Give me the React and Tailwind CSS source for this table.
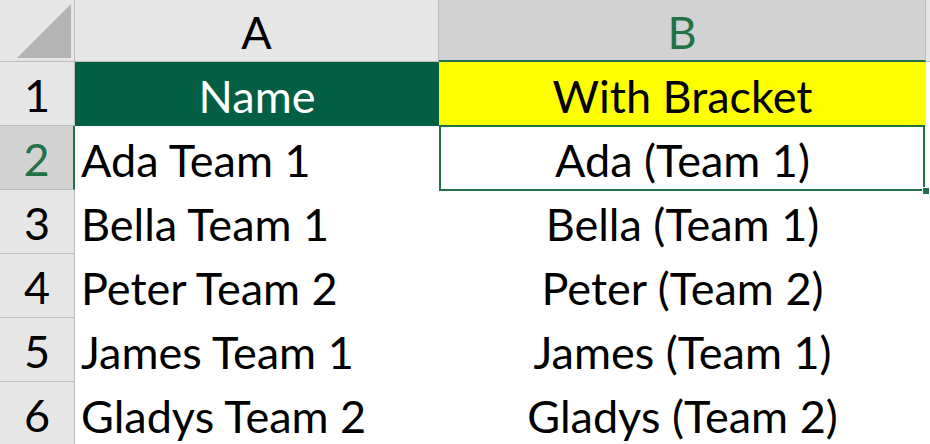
const rows = [
  { a: 'Ada Team 1', b: 'Ada (Team 1)' },
  { a: 'Bella Team 1', b: 'Bella (Team 1)' },
  { a: 'Peter Team 2', b: 'Peter (Team 2)' },
  { a: 'James Team 1', b: 'James (Team 1)' },
  { a: 'Gladys Team 2', b: 'Gladys (Team 2)' },
]

function RowNum({ n, active }) {
  return (
    <div
      className={`flex h-[64px] items-center justify-center border-b border-r border-[#bdbdbd] pt-[4px] ${
        active ? 'bg-[#d2d2d2] text-[#217346] border-r-2 border-r-[#217346]' : 'bg-[#e6e6e6] text-black'
      }`}
    >
      {n}
    </div>
  )
}

export default function App() {
  return (
    <div
      className="h-[444px] w-[930px] overflow-hidden bg-white text-[45px] leading-none text-black"
      style={{ fontFamily: 'Lato, "Open Sans", sans-serif' }}
    >
      {/* Column headers */}
      <div className="flex h-[62px]">
        <div className="flex h-full w-[75px] shrink-0 items-end justify-end border-b border-r border-[#bdbdbd] bg-[#e6e6e6] pb-[3px] pr-[3px]">
          <svg width="54" height="54" viewBox="0 0 54 54">
            <polygon points="0,54 54,54 54,0" fill="#b4b4b4" />
          </svg>
        </div>
        <div className="flex h-full w-[364px] shrink-0 items-center justify-center border-b border-r border-[#bdbdbd] bg-[#e6e6e6] pt-[3px]">
          A
        </div>
        <div className="flex h-full w-[487px] shrink-0 items-center justify-center border-b-2 border-r border-b-[#217346] border-r-[#bdbdbd] bg-[#d2d2d2] pt-[4px] text-[#217346]">
          B
        </div>
        <div className="h-full flex-1 border-b border-[#bdbdbd] bg-[#e6e6e6]" />
      </div>

      {/* Row 1 */}
      <div className="flex h-[64px]">
        <div className="w-[75px] shrink-0">
          <RowNum n={1} />
        </div>
        <div className="flex h-full w-[364px] shrink-0 items-center justify-center bg-[#035f43] pt-[4px] text-white">
          Name
        </div>
        <div className="flex h-full w-[487px] shrink-0 items-center justify-center bg-[#ffff00] pt-[4px]">
          With Bracket
        </div>
        <div className="h-full flex-1" />
      </div>

      {/* Data rows */}
      {rows.map((r, i) => (
        <div key={i} className="flex h-[64px]">
          <div className="w-[75px] shrink-0">
            <RowNum n={i + 2} active={i === 0} />
          </div>
          <div className="flex h-full w-[364px] shrink-0 items-center pl-[6px] pt-[4px]">{r.a}</div>
          <div className="relative flex h-full w-[487px] shrink-0 items-center justify-center pt-[4px]">
            {r.b}
            {i === 0 && (
              <>
                <div className="pointer-events-none absolute -top-[1px] -bottom-[1px] left-0 right-[1px] border-2 border-[#217346]" />
                <div className="absolute -bottom-[5px] -right-[4px] h-[8px] w-[8px] border border-white bg-[#217346]" />
              </>
            )}
          </div>
          <div className="h-full flex-1" />
        </div>
      ))}
    </div>
  )
}
